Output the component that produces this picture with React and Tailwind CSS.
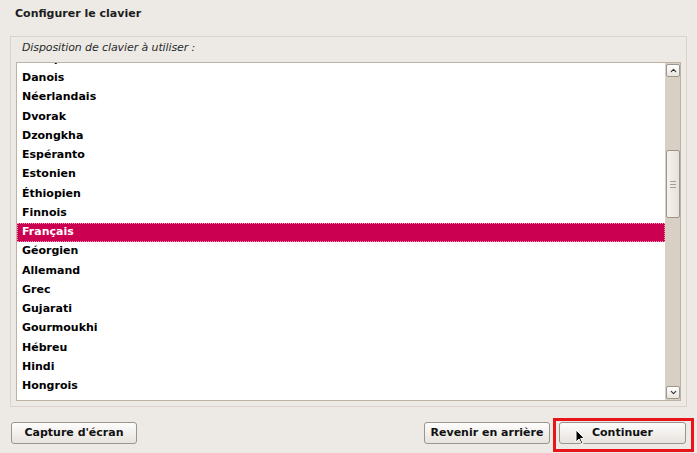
import { ChevronUp, ChevronDown } from 'lucide-react'

const LAYOUTS = [
  'Tchèque',
  'Danois',
  'Néerlandais',
  'Dvorak',
  'Dzongkha',
  'Espéranto',
  'Estonien',
  'Éthiopien',
  'Finnois',
  'Français',
  'Géorgien',
  'Allemand',
  'Grec',
  'Gujarati',
  'Gourmoukhi',
  'Hébreu',
  'Hindi',
  'Hongrois',
  'Islandais',
]

const SELECTED = 'Français'

export default function App() {
  return (
    <div className="flex h-[453px] w-[697px] flex-col overflow-hidden bg-[#edeae6] font-['DejaVu_Sans',sans-serif] text-[11px] text-black">
      <div className="h-[36px] pl-[15px] pt-[6px] font-bold text-[#1c1c1c]">Configurer le clavier</div>

      {/* Frame */}
      <div className="ml-[10px] mr-[10px] flex h-[371px] flex-col border border-[#d9d3cb] px-[5px] pb-[5px]">
        <div className="h-[25px] pl-[6px] pt-[3px] italic tracking-[-0.1px] text-[#2a2a2a]">Disposition de clavier à utiliser :</div>

        <div className="flex h-[339px] border border-[#bcb2a5] bg-white">
          <div className="flex-1 overflow-hidden">
            <div className="mt-[-13.5px]">
              {LAYOUTS.map((name) => (
                <Row key={name} name={name} selected={name === SELECTED} />
              ))}
            </div>
          </div>
          <Scrollbar />
        </div>
      </div>

      {/* Buttons */}
      <div className="mt-[11px] flex items-start pl-[11px] pr-[3px]">
        <Button className="mt-[4px] w-[126px]">Capture d'écran</Button>
        <div className="flex-1" />
        <Button className="mt-[4px] mr-[3px] w-[126px]">Revenir en arrière</Button>
        <div className="border-[3px] border-[#e8141c] pb-[5px] pl-[3px] pr-[5px] pt-[1px]">
          <Button className="relative w-[127px]">
            Continuer
            <Cursor />
          </Button>
        </div>
      </div>
    </div>
  )
}

function Row({ name, selected }) {
  if (selected) {
    return (
      <div className="flex h-[19.25px] items-center border border-dotted border-[#f59ab8] bg-[#cc0050] pl-[4px] font-bold text-white">
        {name}
      </div>
    )
  }
  return <div className="flex h-[19.25px] items-center pl-[5px] font-bold">{name}</div>
}

function Scrollbar() {
  return (
    <div className="flex w-[15px] flex-col bg-[#d8d0c5] pl-[1px] pt-[1px] pb-[1px]">
      <div className="flex h-[13px] items-center justify-center rounded-[2px] border border-[#9d968c] bg-gradient-to-b from-white to-[#e9e5df]">
        <ChevronUp className="h-[9px] w-[9px] text-[#333]" strokeWidth={3} />
      </div>
      <div className="h-[73px]" />
      <div className="flex h-[68px] flex-col items-center justify-center gap-[2px] rounded-[2px] border border-[#9d968c] bg-gradient-to-r from-[#f4f2ef] to-[#e6e1db]">
        <div className="h-px w-[6px] bg-[#a59d92]" />
        <div className="h-px w-[6px] bg-[#a59d92]" />
        <div className="h-px w-[6px] bg-[#a59d92]" />
      </div>
      <div className="flex-1" />
      <div className="flex h-[13px] items-center justify-center rounded-[2px] border border-[#9d968c] bg-gradient-to-b from-white to-[#e9e5df]">
        <ChevronDown className="h-[9px] w-[9px] text-[#333]" strokeWidth={3} />
      </div>
    </div>
  )
}

function Button({ children, className = '' }) {
  return (
    <div
      className={`flex h-[22px] items-center justify-center rounded-[3px] border border-[#9a948c] bg-gradient-to-b from-[#fdfdfc] to-[#e7e3de] font-bold text-[#111] ${className}`}
    >
      {children}
    </div>
  )
}

function Cursor() {
  return (
    <svg className="absolute left-[15px] top-[6px]" width="10" height="16" viewBox="0 0 10 16">
      <path d="M1 1 L1 13 L4 10 L6.5 15 L8 14.3 L5.6 9.4 L9.5 9.4 Z" fill="#000" stroke="#fff" strokeWidth="1" strokeLinejoin="round" />
    </svg>
  )
}
